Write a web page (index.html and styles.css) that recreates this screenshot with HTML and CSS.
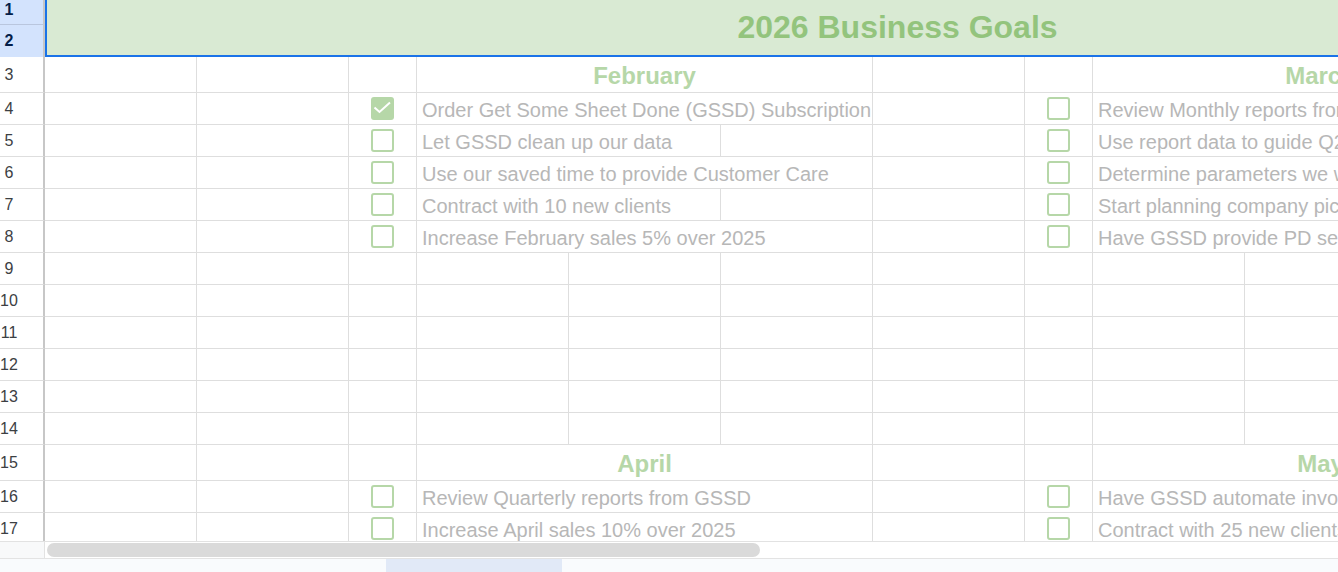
FILE: index.html
```html
<!DOCTYPE html>
<html lang="en">
<head>
    <meta charset="UTF-8">
    <meta name="viewport" content="width=device-width, initial-scale=1.0">
    <title>2026 Business Goals</title>
    <link rel="stylesheet" href="styles.css">
</head>
<body>
    <div class="sheet">
        <!-- rows 1-2: merged title -->
        <div class="top">
            <div class="top-heads">
                <div class="rh sel r1">1</div>
                <div class="rh sel r2">2</div>
            </div>
            <div class="title">2026 Business Goals</div>
        </div>

        <div class="row tall">
            <div class="rh">3</div>
            <div></div><div></div><div></div>
            <div class="s3 month">February</div>
            <div></div><div></div>
            <div class="s3 month">March</div>
        </div>

        <div class="row">
            <div class="rh">4</div>
            <div></div><div></div>
            <div class="box"><span class="cb on"><svg viewBox="0 0 23 23"><path d="M3.5 10.5 L8.5 15 L19 5.5"/></svg></span></div>
            <div class="s3 task">Order Get Some Sheet Done (GSSD) Subscription</div>
            <div></div>
            <div class="box"><span class="cb"></span></div>
            <div class="s3 task">Review Monthly reports from GSSD</div>
        </div>

        <div class="row">
            <div class="rh">5</div>
            <div></div><div></div>
            <div class="box"><span class="cb"></span></div>
            <div class="s2 task">Let GSSD clean up our data</div>
            <div></div>
            <div></div>
            <div class="box"><span class="cb"></span></div>
            <div class="s3 task">Use report data to guide Q2 strategy</div>
        </div>

        <div class="row">
            <div class="rh">6</div>
            <div></div><div></div>
            <div class="box"><span class="cb"></span></div>
            <div class="s3 task">Use our saved time to provide Customer Care</div>
            <div></div>
            <div class="box"><span class="cb"></span></div>
            <div class="s3 task">Determine parameters we want to track</div>
        </div>

        <div class="row">
            <div class="rh">7</div>
            <div></div><div></div>
            <div class="box"><span class="cb"></span></div>
            <div class="s2 task">Contract with 10 new clients</div>
            <div></div>
            <div></div>
            <div class="box"><span class="cb"></span></div>
            <div class="s3 task">Start planning company picnic</div>
        </div>

        <div class="row">
            <div class="rh">8</div>
            <div></div><div></div>
            <div class="box"><span class="cb"></span></div>
            <div class="s3 task">Increase February sales 5% over 2025</div>
            <div></div>
            <div class="box"><span class="cb"></span></div>
            <div class="s3 task">Have GSSD provide PD sessions</div>
        </div>

        <div class="row"><div class="rh">9</div><div></div><div></div><div></div><div></div><div></div><div></div><div></div><div></div><div></div><div></div><div></div></div>
        <div class="row"><div class="rh">10</div><div></div><div></div><div></div><div></div><div></div><div></div><div></div><div></div><div></div><div></div><div></div></div>
        <div class="row"><div class="rh">11</div><div></div><div></div><div></div><div></div><div></div><div></div><div></div><div></div><div></div><div></div><div></div></div>
        <div class="row"><div class="rh">12</div><div></div><div></div><div></div><div></div><div></div><div></div><div></div><div></div><div></div><div></div><div></div></div>
        <div class="row"><div class="rh">13</div><div></div><div></div><div></div><div></div><div></div><div></div><div></div><div></div><div></div><div></div><div></div></div>
        <div class="row"><div class="rh">14</div><div></div><div></div><div></div><div></div><div></div><div></div><div></div><div></div><div></div><div></div><div></div></div>

        <div class="row tall">
            <div class="rh">15</div>
            <div></div><div></div><div></div>
            <div class="s3 month">April</div>
            <div></div><div></div>
            <div class="s3 month">May</div>
        </div>

        <div class="row">
            <div class="rh">16</div>
            <div></div><div></div>
            <div class="box"><span class="cb"></span></div>
            <div class="s3 task">Review Quarterly reports from GSSD</div>
            <div></div>
            <div class="box"><span class="cb"></span></div>
            <div class="s3 task">Have GSSD automate invoicing</div>
        </div>

        <div class="row">
            <div class="rh">17</div>
            <div></div><div></div>
            <div class="box"><span class="cb"></span></div>
            <div class="s3 task">Increase April sales 10% over 2025</div>
            <div></div>
            <div class="box"><span class="cb"></span></div>
            <div class="s3 task">Contract with 25 new clients</div>
        </div>
    </div>

    <div class="hscroll">
        <div class="corner"></div>
        <div class="track"><div class="thumb"></div></div>
    </div>

    <div class="tabs">
        <div class="tab"></div>
    </div>
</body>
</html>
```

FILE: styles.css
```css
html, body {
    margin: 0;
    width: 1338px;
    height: 572px;
    overflow: hidden;
    background: #ffffff;
    font-family: 'Liberation Sans', Arial, sans-serif;
}
.sheet {
    height: 541px;
    overflow: hidden;
}
.top {
    display: flex;
    height: 57px;
}
.top-heads {
    display: flex;
    flex-direction: column;
    width: 45px;
    flex: none;
}
.title {
    flex: none;
    width: 1703px;
    box-sizing: border-box;
    background: #d9ead3;
    border-left: 2px solid #1a73e8;
    border-bottom: 2px solid #1a73e8;
    color: #93c47d;
    font-size: 32px;
    font-weight: 700;
    display: flex;
    align-items: center;
    justify-content: center;
}
.row {
    display: grid;
    grid-template-columns: 45px 152px 152px 68px 152px 152px 152px 152px 68px 152px 152px 152px;
    height: 32px;
}
.row.tall {
    height: 36px;
}
.row > div {
    box-sizing: border-box;
    border-right: 1px solid #dedede;
    border-bottom: 1px solid #dedede;
    min-width: 0;
}
.rh {
    box-sizing: border-box;
    border-right: 2px solid #c7c7c7 !important;
    border-bottom: 1px solid #d6d6d6;
    display: flex;
    align-items: center;
    justify-content: center;
    padding-right: 25px;
    font-size: 16px;
    color: #3c4043;
    background: #ffffff;
}
.rh.sel {
    background: #d3e3fd;
    color: #041e49;
    font-weight: 700;
    border-bottom-color: #b9c6de;
}
.rh.r1 {
    height: 25px;
    padding-bottom: 4px;
}
.rh.r2 {
    height: 32px;
    border-bottom: none;
}
.s2 {
    grid-column: span 2;
}
.s3 {
    grid-column: span 3;
}
.month {
    display: flex;
    align-items: center;
    justify-content: center;
    font-size: 24px;
    font-weight: 700;
    color: #b6d7a8;
    padding-top: 3px;
}
.task {
    display: flex;
    align-items: center;
    padding-left: 5px;
    padding-top: 3px;
    font-size: 20px;
    color: #b7b7b7;
    white-space: nowrap;
    overflow: hidden;
}
.box {
    display: flex;
    align-items: center;
    justify-content: center;
}
.cb {
    display: block;
    width: 23px;
    height: 23px;
    box-sizing: border-box;
    border: 2px solid #b6d7a8;
    border-radius: 3px;
}
.cb.on {
    background: #b6d7a8;
    border: none;
}
.cb svg {
    display: block;
    width: 23px;
    height: 23px;
}
.cb path {
    fill: none;
    stroke: #ffffff;
    stroke-width: 2;
}
.hscroll {
    display: flex;
    height: 17px;
    border-top: 1px solid #e2e2e2;
    box-sizing: border-box;
}
.corner {
    width: 45px;
    flex: none;
    box-sizing: border-box;
    background: #f8f9fa;
    border-right: 1px solid #e2e2e2;
}
.track {
    flex: 1;
    padding: 1px 2px;
}
.thumb {
    width: 713px;
    height: 14px;
    border-radius: 7px;
    background: #dadada;
}
.tabs {
    height: 14px;
    box-sizing: border-box;
    border-top: 1px solid #e3e3e3;
    background: #f9fbfd;
    padding-left: 386px;
}
.tab {
    width: 176px;
    height: 13px;
    background: #e1e9f7;
}
```
